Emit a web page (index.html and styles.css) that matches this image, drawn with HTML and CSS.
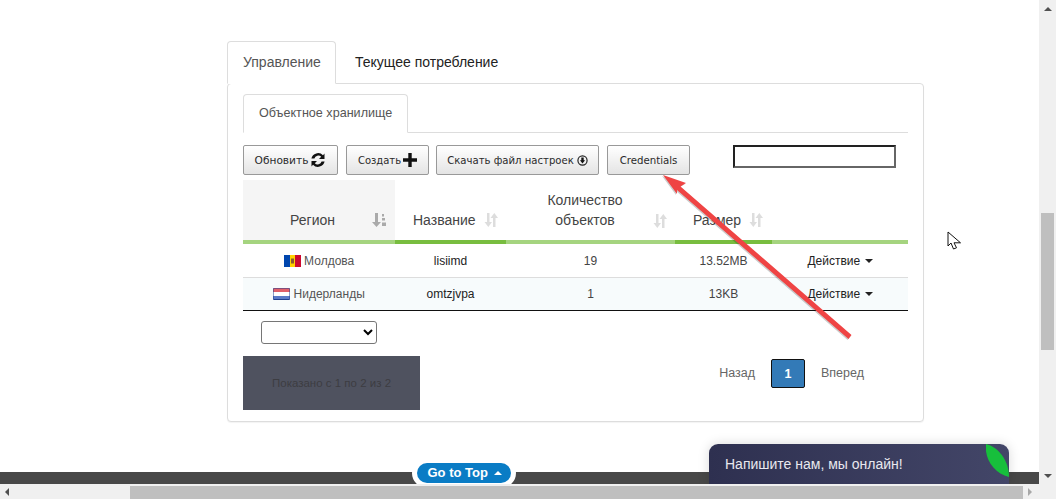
FILE: index.html
```html
<!DOCTYPE html>
<html lang="ru">
<head>
<meta charset="utf-8">
<title>Объектное хранилище</title>
<link rel="stylesheet" href="styles.css">
</head>
<body>
<div class="viewport">
  <main class="page">
    <div class="content">
      <nav class="tabs outer-tabs">
        <a class="tab active">Управление</a>
        <a class="tab plain">Текущее потребление</a>
      </nav>
      <section class="panel">
        <nav class="tabs inner-tabs">
          <a class="tab active">Объектное хранилище</a>
        </nav>
        <div class="toolbar">
          <button class="btn btn-refresh">Обновить
            <svg class="ico-refresh" viewBox="0 0 16 16"><path d="M14.500 1.500V7H9l2.200-2.200A4 4 0 0 0 4.400 6.500H1.400A6.800 6.800 0 0 1 13 3.300z"/><path d="M1.500 14.500V9H7l-2.200 2.200A4 4 0 0 0 11.600 9.500h3A6.800 6.800 0 0 1 3 12.700z"/></svg>
          </button>
          <button class="btn btn-create">Создать
            <svg class="ico-plus" viewBox="0 0 14 14"><path d="M5.300 0h3.400v5.300H14v3.400H8.700V14H5.300V8.700H0V5.300h5.300z"/></svg>
          </button>
          <button class="btn btn-download">Скачать файл настроек
            <svg class="ico-down" viewBox="0 0 12 12"><circle cx="6" cy="6" r="5" fill="none" stroke="#222" stroke-width="1.300"/><path d="M4.700 2.800h2.600v3h1.500L6 9.400 3.200 5.800h1.500z"/></svg>
          </button>
          <button class="btn btn-cred">Credentials</button>
          <input class="search" type="text" aria-label="Поиск">
        </div>
        <table class="grid">
          <colgroup>
            <col class="c1"><col class="c2"><col class="c3"><col class="c4"><col class="c5">
          </colgroup>
          <thead>
            <tr>
              <th class="sorted"><span class="th-in th-region"><span class="lbl-center">Регион</span>
                <svg class="sort on" viewBox="0 0 14 14"><path d="M3 0h3v9h3L4.500 14 0 9h3z"/><path d="M10 1h2v2.500h-2zM10 5h3v2.500h-3zM10 9.500h4V13h-4z"/></svg></span></th>
              <th class="hl"><span class="th-in"><span>Название</span>
                <svg class="sort" viewBox="0 0 14 14"><path d="M3 0h2.500v9H8l-3.700 5L.5 9H3z"/><path d="M9 14h2.500V5H14L10.300 0 6.500 5H9z"/></svg></span></th>
              <th><span class="th-in th-multi"><span class="lbl-center">Количество<br>объектов</span>
                <svg class="sort" viewBox="0 0 14 14"><path d="M3 0h2.500v9H8l-3.700 5L.5 9H3z"/><path d="M9 14h2.500V5H14L10.300 0 6.500 5H9z"/></svg></span></th>
              <th class="hl"><span class="th-in"><span>Размер</span>
                <svg class="sort" viewBox="0 0 14 14"><path d="M3 0h2.500v9H8l-3.700 5L.5 9H3z"/><path d="M9 14h2.500V5H14L10.300 0 6.500 5H9z"/></svg></span></th>
              <th></th>
            </tr>
          </thead>
          <tbody>
            <tr class="row-first">
              <td class="muted"><svg class="flag" viewBox="0 0 17 12"><rect width="6" height="12" fill="#0046ae"/><rect x="6" width="5" height="12" fill="#ffd200"/><rect x="11" width="6" height="12" fill="#cc092f"/><rect x="7" y="3.500" width="3" height="5" fill="#8a5a2b"/></svg> Молдова</td>
              <td class="dark">lisiimd</td>
              <td>19</td>
              <td>13.52MB</td>
              <td class="dark">Действие <i class="caret"></i></td>
            </tr>
            <tr class="alt">
              <td class="muted"><svg class="flag" viewBox="0 0 17 12"><rect width="17" height="12" rx="1" fill="#1f3f8f"/><rect x=".5" y=".5" width="16" height="3.500" fill="#e0606a"/><rect x=".5" y="4" width="16" height="4" fill="#fff"/><rect x=".5" y="8" width="16" height="3" fill="#5a7bc8"/></svg> Нидерланды</td>
              <td class="dark">omtzjvpa</td>
              <td>1</td>
              <td>13KB</td>
              <td class="dark">Действие <i class="caret"></i></td>
            </tr>
          </tbody>
        </table>
        <div class="length"><select class="length-select" aria-label="Количество"><option></option></select></div>
        <div class="footer-row">
          <div class="info">Показано с 1 по 2 из 2</div>
          <div class="pager">
            <a class="pg">Назад</a>
            <a class="pg current">1</a>
            <a class="pg">Вперед</a>
          </div>
        </div>
      </section>
    </div>
    <footer class="site-footer">
      <a class="to-top">Go to Top <i class="caret-up"></i></a>
    </footer>
    <aside class="chat">
      <span>Напишите нам, мы онлайн!</span>
      <svg class="leaf" viewBox="0 0 23 33"><path d="M0 0C12 3 23 16 23 33 8 30-2 14 0 0z" fill="#17bf3c"/></svg>
    </aside>
    <svg class="arrow" viewBox="0 0 1056 499"><path d="M663 175 686 183 680.500 186.500 851.500 335 848.500 339 677 190 677 194z" fill="#ef4444"/></svg>
    <svg class="cursor" viewBox="0 0 15 20"><path d="M1 1v14l3-3 2.500 6 3-1.200-2.500-5h6.500z" fill="#fff" stroke="#111" stroke-width="1"/></svg>
  </main>
  <div class="vbar">
    <i class="arr arr-up"></i>
    <div class="vtrack"><div class="vthumb"></div></div>
    <i class="arr arr-down"></i>
  </div>
  <div class="hbar">
    <i class="arr arr-left"></i>
    <div class="hthumb"></div>
    <i class="arr arr-right"></i>
  </div>
  <div class="corner"></div>
</div>
</body>
</html>
```
FILE: styles.css
```css
* { box-sizing: border-box; }
html, body { margin: 0; padding: 0; height: 100%; overflow: hidden; background: #fff; }
body { font-family: "Liberation Sans", Arial, sans-serif; font-size: 12px; color: #333; }

.viewport {
  width: 1056px; height: 499px;
  display: grid;
  grid-template-columns: 1039px 17px;
  grid-template-rows: 484px 15px;
}

.page { position: relative; overflow: hidden; display: flex; flex-direction: column; background: #fff; }
.content { width: 697px; margin-left: 227px; padding-top: 41px; flex: 0 0 472px; }

.tabs { display: flex; }
.outer-tabs { height: 42px; font-size: 14px; }
.tab { display: block; border: 1px solid transparent; border-radius: 4px 4px 0 0; line-height: 20px; }
.outer-tabs .tab { padding: 10px 14px 0 15px; height: 43px; }
.outer-tabs .active { width: 109px; color: #555; border-color: #ddd; border-bottom-color: #fff; background: #fff; position: relative; z-index: 1; }
.plain { color: #222; padding-left: 18px !important; }

.panel {
  height: 339px; padding: 10px 15px 0;
  border: 1px solid #ddd; border-radius: 4px; background: #fff;
  box-shadow: 0 1px 1px rgba(0,0,0,.05);
}
.inner-tabs { height: 39px; border-bottom: 1px solid #ddd; font-size: 12.600px; }
.inner-tabs .tab { width: 165px; height: 39px; padding: 8px 0 0 15px; color: #555; border-color: #ddd; border-bottom-color: #fff; background: #fff; white-space: nowrap; }

.toolbar { display: flex; align-items: flex-start; gap: 8px; padding-top: 12px; height: 47px; }
.btn {
  height: 30px; padding: 0; margin: 0;
  display: inline-flex; align-items: center; justify-content: center; gap: 2px;
  font: 10.200px "DejaVu Sans", Verdana, sans-serif; color: #2a2a2a; white-space: nowrap;
  border: 1px solid #999; border-radius: 2px;
  background: linear-gradient(#fff, #e4e4e4);
}
.btn-refresh { width: 95px; font-size: 10.600px; }
.btn-create { width: 83px; margin-right: -1px; font-size: 10px; }
.btn-download { width: 163px; font-size: 10.100px; }
.btn-cred { width: 83px; }
.ico-refresh { width: 16px; height: 16px; fill: #111; }
.ico-plus { width: 14px; height: 14px; fill: #111; }
.ico-down { width: 11px; height: 11px; fill: #111; margin-left: 1px; }
.search { margin: 0 0 0 35px; width: 163px; height: 23px; border: 2px solid; border-color: #222 #666 #666 #222; background: #fff; padding: 0; }

.grid { width: 665px; border-collapse: separate; border-spacing: 0; table-layout: fixed; }
.c1 { width: 152px; } .c2 { width: 111px; } .c3 { width: 169px; } .c4 { width: 97px; } .c5 { width: 136px; }
.grid th { height: 64px; padding: 0; font-weight: 400; font-size: 14px; color: #444; border-bottom: 4px solid #a5d47f; vertical-align: bottom; }
.grid th.sorted { background: #f5f5f5; }
.grid th.hl { border-bottom-color: #78bd3f; }
.th-in { display: flex; align-items: center; justify-content: space-between; padding: 0 8px 10px 18px; line-height: 20px; }
.th-region { padding: 0 9px 10px 10px; }
.lbl-center { flex: 1; text-align: center; }
.th-multi { align-items: flex-end; padding-left: 0; }
.th-multi .lbl-center { margin-left: 11px; }
.th-multi .sort { margin-bottom: 2px; }
.sort { width: 14px; height: 14px; fill: #ddd; flex: none; }
.sort.on { fill: #aaa; }
.grid th.hl .th-in { justify-content: flex-start; gap: 8px; }
.grid td { height: 33px; padding: 0; text-align: center; font-size: 12px; color: #444; border-bottom: 1px solid #111; }
.grid .row-first td { height: 34px; border-bottom: 1px solid #ddd; }
.alt td { background: #f7fbfc; }
.grid td.muted { color: #555; }
.grid td.dark { color: #222; }
.flag { width: 17px; height: 12px; vertical-align: -2px; }
.caret { display: inline-block; width: 0; height: 0; margin-left: 1px; vertical-align: 2px; border: 4px solid transparent; border-top-color: #222; border-bottom: 0; }

.length { padding: 10px 0 0 18px; height: 45px; }
.length-select { width: 116px; height: 23px; background: #fff; border: 1px solid #767676; border-radius: 3px; display: block; }

.footer-row { display: flex; justify-content: space-between; }
.info { width: 177px; height: 54px; background: #4f525f; color: #3d3d42; display: flex; align-items: center; justify-content: center; font-size: 11.500px; }
.pager { display: flex; align-items: flex-start; padding: 3px 28px 0 0; font-size: 12.500px; }
.pg { display: block; height: 29px; padding: 0 16px; line-height: 28px; color: #666; }
.pg.current { width: 34px; padding: 0; text-align: center; color: #fff; background: #337ab7; border: 1px solid #111; border-radius: 2px; font-weight: 700; }

.site-footer { flex: 1; position: relative; background: #484848; }
.to-top {
  position: absolute; left: 417px; top: -9px; z-index: 2;
  width: 94px; height: 20px; border-radius: 10px; padding-left: 1px;
  background: #0a7cc5; color: #fff; font-size: 13px; font-weight: 700; line-height: 20px; text-align: center;
  box-shadow: 0 0 0 5px #fff;
}
.caret-up { display: inline-block; width: 0; height: 0; margin-left: 2px; vertical-align: 2px; border: 4px solid transparent; border-bottom-color: #fff; border-top: 0; }

.chat {
  position: absolute; left: 709px; top: 444px; width: 300px; height: 40px; overflow: hidden;
  padding: 12px 0 0 16px; color: #e8e8ee; font-size: 14px; line-height: 16px;
  background: linear-gradient(90deg, #2e3050, #434668); border-radius: 9px 9px 0 0;
  box-shadow: 0 0 12px rgba(0,0,0,.15);
}
.leaf { position: absolute; right: 0; top: 0; width: 23px; height: 33px; }

.arrow { position: absolute; left: 0; top: 0; width: 1056px; height: 499px; pointer-events: none; filter: drop-shadow(-1px 1px .5px rgba(0,0,0,.2)); }
.cursor { position: absolute; left: 947px; top: 231px; width: 15px; height: 20px; }

.vbar { grid-column: 2; grid-row: 1; background: #f0f0f0; display: flex; flex-direction: column; padding-left: 1px; }
.vtrack { flex: 1; padding-top: 197px; }
.vthumb { margin-left: 1px; width: 13px; height: 137px; background: #bfbfbf; }
.arr { display: block; flex: none; width: 0; height: 0; border: 4px solid transparent; }
.arr-up { margin: 7px 0 5px 4px; border-bottom-color: #505050; border-top: 0; }
.arr-down { margin: 4px 0 6px 4px; border-top-color: #505050; border-bottom: 0; }
.hbar { grid-column: 1; grid-row: 2; background: #f0f0f0; display: flex; align-items: center; }
.arr-left { margin-left: 5px; border-right-color: #505050; border-left: 0; }
.hthumb { margin: 2px 0 0 121px; width: 893px; height: 13px; background: #bfbfbf; }
.arr-right { margin-left: 5px; border-left-color: #a8a8a8; border-right: 0; }
.corner { grid-column: 2; grid-row: 2; background: #f0f0f0; }
```
